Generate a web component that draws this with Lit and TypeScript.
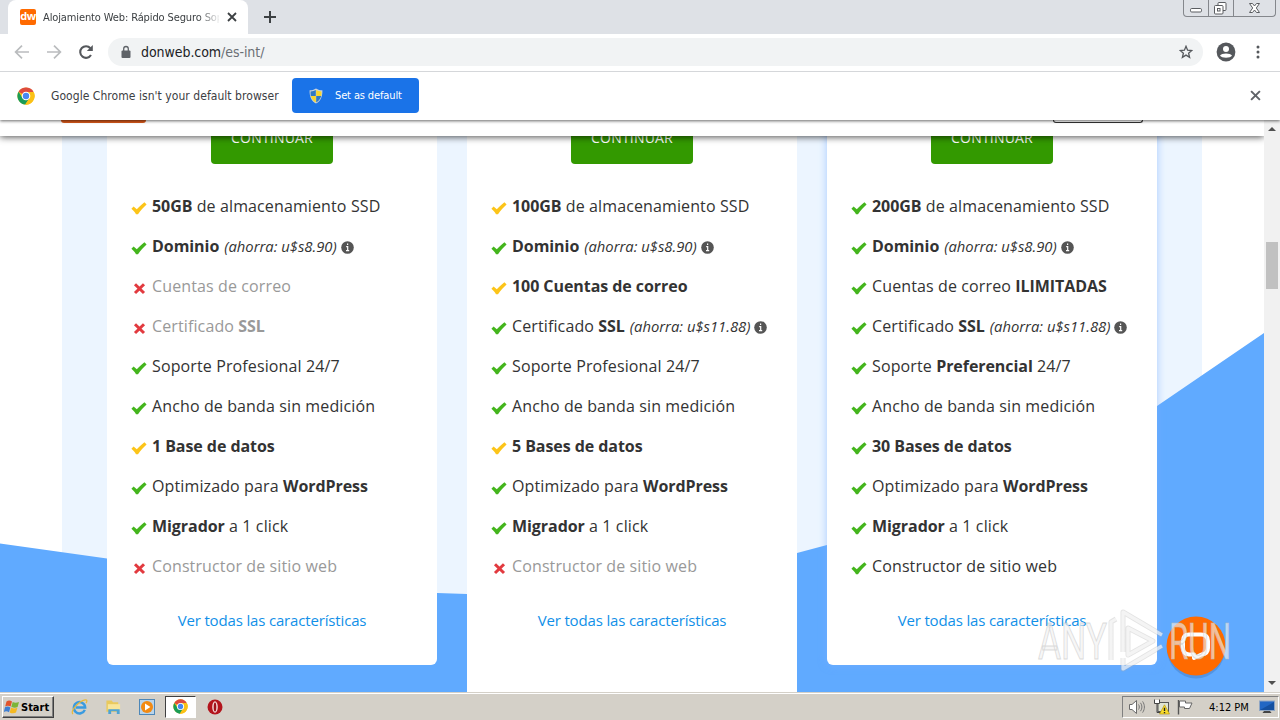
import {LitElement, html, svg, css} from 'lit';
import type {TemplateResult} from 'lit';
import {customElement, property} from 'lit/decorators.js';
import {classMap} from 'lit/directives/class-map.js';

type Mark = 'green' | 'yellow' | 'cross';

interface Feature {
  mark: Mark;
  label: TemplateResult;
  note?: string;
}

interface Plan {
  tall?: boolean;
  featured?: boolean;
  features: Feature[];
}

const support = html`Soporte Profesional 24/7`;
const bandwidth = html`Ancho de banda sin medición`;
const wordpress = html`Optimizado para <b>WordPress</b>`;
const migrator = html`<b>Migrador</b> a 1 click`;
const builder = html`Constructor de sitio web`;

const plans: Plan[] = [
  {
    features: [
      {mark: 'yellow', label: html`<b>50GB</b> de almacenamiento SSD`},
      {mark: 'green', label: html`<b>Dominio</b>`, note: '(ahorra: u$s8.90)'},
      {mark: 'cross', label: html`Cuentas de correo`},
      {mark: 'cross', label: html`Certificado <b>SSL</b>`},
      {mark: 'green', label: support},
      {mark: 'green', label: bandwidth},
      {mark: 'yellow', label: html`<b>1 Base de datos</b>`},
      {mark: 'green', label: wordpress},
      {mark: 'green', label: migrator},
      {mark: 'cross', label: builder},
    ],
  },
  {
    tall: true,
    features: [
      {mark: 'yellow', label: html`<b>100GB</b> de almacenamiento SSD`},
      {mark: 'green', label: html`<b>Dominio</b>`, note: '(ahorra: u$s8.90)'},
      {mark: 'yellow', label: html`<b>100 Cuentas de correo</b>`},
      {mark: 'green', label: html`Certificado <b>SSL</b>`, note: '(ahorra: u$s11.88)'},
      {mark: 'green', label: support},
      {mark: 'green', label: bandwidth},
      {mark: 'yellow', label: html`<b>5 Bases de datos</b>`},
      {mark: 'green', label: wordpress},
      {mark: 'green', label: migrator},
      {mark: 'cross', label: builder},
    ],
  },
  {
    featured: true,
    features: [
      {mark: 'green', label: html`<b>200GB</b> de almacenamiento SSD`},
      {mark: 'green', label: html`<b>Dominio</b>`, note: '(ahorra: u$s8.90)'},
      {mark: 'green', label: html`Cuentas de correo <b>ILIMITADAS</b>`},
      {mark: 'green', label: html`Certificado <b>SSL</b>`, note: '(ahorra: u$s11.88)'},
      {mark: 'green', label: html`Soporte <b>Preferencial</b> 24/7`},
      {mark: 'green', label: bandwidth},
      {mark: 'green', label: html`<b>30 Bases de datos</b>`},
      {mark: 'green', label: wordpress},
      {mark: 'green', label: migrator},
      {mark: 'green', label: builder},
    ],
  },
];

const chromeLogo = (size: number) => html`
  <svg width=${size} height=${size} viewBox="0 0 48 48">
    <circle cx="24" cy="24" r="23" fill="#fbc116" />
    <path d="M24 24 L4.1 12.5 A23 23 0 0 1 43.9 12.5 Z" fill="#dd4b3e" />
    <path d="M4.1 12.5 A23 23 0 0 0 22 46.9 L33 29 L15 29 Z" fill="#1a9c56" />
    <path d="M24 13 H44.2 A23 23 0 0 1 22 46.9 L34 29 Z" fill="#fbc116" />
    <circle cx="24" cy="24" r="11.5" fill="#fff" />
    <circle cx="24" cy="24" r="8.5" fill="#4688f1" />
  </svg>
`;

const closeIcon = (size: number, color: string) => html`
  <svg width=${size} height=${size} viewBox="0 0 10 10">
    <path d="M1 1 L9 9 M9 1 L1 9" stroke=${color} stroke-width="1.8" />
  </svg>
`;

@customElement('plan-mark')
export class PlanMark extends LitElement {
  @property() kind: Mark = 'green';

  static styles = css`
    :host {
      display: block;
      width: 16px;
      height: 16px;
    }

    svg {
      display: block;
    }
  `;

  override render() {
    if (this.kind === 'cross') {
      return html`
        <svg width="16" height="16" viewBox="0 0 16 16">
          <path d="M4 4.2 L13 13 M13 4.2 L4 13" stroke="#e23a3f" stroke-width="3" />
        </svg>
      `;
    }
    const color = this.kind === 'green' ? '#44b51d' : '#fcc419';
    return html`
      <svg width="16" height="16" viewBox="0 0 16 16">
        <path
          d="M0.4 8.8 L2.6 6.4 L5.8 9.2 C8 7 10.6 4.3 13.4 2.2 L15.6 4.4 C12.4 7.4 9.6 10.4 7 14.2 L5 14.2 C3.8 12 2.2 10.2 0.4 8.8 Z"
          fill=${color}
        />
      </svg>
    `;
  }
}

@customElement('plan-card')
export class PlanCard extends LitElement {
  @property({ type: Object }) plan: Plan = plans[0];

  static styles = css`
    :host {
      display: block;
      width: 330px;
    }

    .card {
      box-sizing: border-box;
      height: 547px;
      background: #fff;
      border-radius: 0 0 6px 6px;
      display: flex;
      flex-direction: column;
      align-items: center;
    }

    .card--tall {
      height: 600px;
    }

    .card--featured {
      box-shadow: 0 0 8px rgba(120, 175, 255, 0.6);
    }

    .button {
      box-sizing: border-box;
      width: 122px;
      height: 46px;
      border-radius: 4px;
      background: #339900;
      color: #fff;
      font-size: 14px;
      letter-spacing: 0.2px;
      line-height: 39px;
      text-align: center;
    }

    ul {
      align-self: stretch;
      margin: 22px 0 0;
      padding: 0 0 0 24px;
      list-style: none;
    }

    li {
      display: flex;
      align-items: center;
      height: 40px;
      color: #333;
      font-size: 16px;
      letter-spacing: 0.12px;
      white-space: nowrap;
    }

    li.off {
      color: #999;
    }

    b {
      letter-spacing: -0.06px;
    }

    plan-mark {
      margin: 4px 5px 0 0;
    }

    i {
      margin-left: 5px;
      font-size: 14.8px;
      letter-spacing: 0;
    }

    .info {
      width: 13px;
      height: 13px;
      margin: 2px 0 0 4px;
    }

    .more {
      margin-top: 22px;
      color: #1190e8;
      font-size: 15px;
      letter-spacing: -0.16px;
      line-height: 24px;
      white-space: nowrap;
    }
  `;

  renderFeature(feature: Feature) {
    return html`
      <li class=${classMap({ off: feature.mark === 'cross' })}>
        <plan-mark kind=${feature.mark}></plan-mark>
        <span>${feature.label}</span>
        ${feature.note
          ? html`
              <i>${feature.note}</i>
              <svg class="info" viewBox="0 0 13 13">
                <circle cx="6.5" cy="6.5" r="6.3" fill="#555" />
                <path d="M6.6 2.4 V4 M5.2 5.6 H6.7 V9.6 M5 9.7 H8.2" fill="none" stroke="#fff" stroke-width="1.2" />
              </svg>
            `
          : ''}
      </li>
    `;
  }

  override render() {
    return html`
      <div
        class=${classMap({
          card: true,
          'card--tall': !!this.plan.tall,
          'card--featured': !!this.plan.featured,
        })}
      >
        <div class="button">CONTINUAR</div>
        <ul>
          ${this.plan.features.map((feature) => this.renderFeature(feature))}
        </ul>
        <div class="more">Ver todas las características</div>
      </div>
    `;
  }
}

@customElement('browser-chrome')
export class BrowserChrome extends LitElement {
  static styles = css`
    :host {
      display: block;
      font-family: 'DejaVu Sans Condensed', 'DejaVu Sans', sans-serif;
      font-stretch: condensed;
      position: relative;
      z-index: 3;
      box-shadow: 0 1px 3px rgba(0, 0, 0, 0.6);
    }

    svg {
      display: block;
      flex: none;
    }

    .tabs {
      display: flex;
      height: 34px;
      padding-left: 8px;
      background: #dee1e6;
    }

    .tab {
      box-sizing: border-box;
      display: flex;
      align-items: center;
      width: 240px;
      padding: 0 11px 0 12px;
      border-radius: 8px 8px 0 0;
      background: #fff;
    }

    .favicon {
      width: 16px;
      height: 16px;
      border-radius: 2px;
      background: #ff6a00;
      color: #fff;
      font: bold 11px/14px 'Open Sans', sans-serif;
      letter-spacing: -0.5px;
      text-align: center;
    }

    .tab__title {
      width: 176px;
      margin-left: 7px;
      overflow: hidden;
      color: #3c4043;
      font-size: 11px;
      letter-spacing: -0.12px;
      white-space: nowrap;
      mask-image: linear-gradient(to right, #000 155px, transparent 178px);
    }

    .tab__close {
      margin-left: auto;
    }

    .new-tab {
      align-self: center;
      margin-left: 16px;
    }

    .window {
      display: flex;
      height: 16px;
      margin-left: auto;
      margin-right: 4px;
      border: 1px solid #84878c;
      border-top: 0;
      border-radius: 0 0 4px 4px;
    }

    .window > svg + svg {
      border-left: 1px solid #84878c;
    }

    .toolbar {
      box-sizing: border-box;
      display: flex;
      align-items: center;
      height: 38px;
      padding: 0 14px 1px;
      background: #fff;
      border-bottom: 1px solid #d5d7da;
    }

    .nav {
      display: flex;
      gap: 16px;
    }

    .omnibox {
      box-sizing: border-box;
      display: flex;
      align-items: center;
      width: 1095px;
      height: 28px;
      margin-left: 14px;
      padding: 0 10px 0 12px;
      border-radius: 14px;
      background: #f1f3f4;
      font-size: 14px;
      letter-spacing: -0.06px;
      color: #202124;
    }

    .url {
      margin-left: 9px;
      flex: 1;
    }

    .url span {
      color: #6a6f74;
    }

    .profile {
      margin-left: 13px;
    }

    .dots {
      margin-left: 20px;
    }

    .infobar {
      box-sizing: border-box;
      display: flex;
      align-items: center;
      height: 48px;
      padding: 0 19px 1px 17px;
      background: #fff;
      color: #3c4043;
      font-size: 12px;
      letter-spacing: 0.05px;
      white-space: nowrap;
    }

    .infobar__text {
      width: 228px;
      margin: 0 13px 0 16px;
    }

    .infobar__button {
      box-sizing: border-box;
      display: flex;
      align-items: center;
      gap: 12px;
      width: 127px;
      height: 35px;
      padding-left: 17px;
      border-radius: 4px;
      background: #1a73e8;
      color: #fff;
      font-size: 11px;
      letter-spacing: -0.13px;
    }

    .infobar__close {
      margin-left: auto;
    }
  `;

  override render() {
    return html`
      <div class="tabs">
        <div class="tab">
          <div class="favicon">dw</div>
          <div class="tab__title">Alojamiento Web: Rápido Seguro Sop</div>
          <div class="tab__close">${closeIcon(10, '#3c4043')}</div>
        </div>
        <svg class="new-tab" width="12" height="12" viewBox="0 0 12 12">
          <path d="M6 0 V12 M0 6 H12" stroke="#3c4043" stroke-width="2" />
        </svg>
        <div class="window">
          <svg width="24" height="16" viewBox="0 0 24 16">
            <rect x="6.5" y="8.5" width="11" height="3.5" rx="1.2" fill="#fff" stroke="#5a5d61" />
          </svg>
          <svg width="24" height="16" viewBox="0 0 24 16">
            <rect x="9" y="2.5" width="8" height="8" rx="1" fill="#fff" stroke="#5a5d61" />
            <rect x="5.5" y="5.5" width="8.5" height="8.5" rx="1" fill="#fff" stroke="#5a5d61" />
            <rect x="8.5" y="8.5" width="2.5" height="2.5" fill="#fff" stroke="#5a5d61" />
          </svg>
          <svg width="41" height="16" viewBox="0 0 41 16">
            <path
              d="M15.5 3.5 H18.5 L20.5 6 L22.5 3.5 H25.5 L22.3 8 L25.5 12.5 H22.5 L20.5 10 L18.5 12.5 H15.5 L18.7 8 Z"
              fill="#fff"
              stroke="#5a5d61"
            />
          </svg>
        </div>
      </div>

      <div class="toolbar">
        <div class="nav">
          <svg width="16" height="16" viewBox="0 0 16 16">
            <path d="M15 8 H2 M8 1.6 L1.6 8 L8 14.4" fill="none" stroke="#babcbe" stroke-width="1.7" />
          </svg>
          <svg width="16" height="16" viewBox="0 0 16 16">
            <path d="M1 8 H14 M8 1.6 L14.4 8 L8 14.4" fill="none" stroke="#babcbe" stroke-width="1.7" />
          </svg>
          <svg width="16" height="16" viewBox="0 0 16 16">
            <path d="M13 11 A5.8 5.8 0 1 1 12.4 4.2" fill="none" stroke="#55585c" stroke-width="2.1" />
            <path d="M14.8 1 V7 H8.8 Z" fill="#55585c" />
          </svg>
        </div>
        <div class="omnibox">
          <svg width="12" height="14" viewBox="0 0 12 14">
            <rect x="1.5" y="5.5" width="9" height="7.5" rx="1" fill="#5f6368" />
            <path d="M3.7 6 V3.8 A2.3 2.3 0 0 1 8.3 3.8 V6" fill="none" stroke="#5f6368" stroke-width="1.3" />
          </svg>
          <div class="url">donweb.com<span>/es-int/</span></div>
          <svg width="14" height="14" viewBox="0 0 14 14">
            <path
              d="M7 1.3 L8.6 5.2 L12.8 5.5 L9.6 8.2 L10.6 12.4 L7 10.1 L3.4 12.4 L4.4 8.2 L1.2 5.5 L5.4 5.2 Z"
              fill="none"
              stroke="#55585c"
              stroke-width="1.3"
            />
          </svg>
        </div>
        <svg class="profile" width="20" height="20" viewBox="0 0 20 20">
          <circle cx="10" cy="10" r="9.4" fill="#55585c" />
          <circle cx="10" cy="7" r="3" fill="#fff" />
          <path d="M4 13.6 C5.6 10.8 14.4 10.8 16 13.6 C14.4 16.6 5.6 16.6 4 13.6 Z" fill="#fff" />
        </svg>
        <svg class="dots" width="4" height="14" viewBox="0 0 4 14">
          <circle cx="2" cy="2" r="1.5" fill="#55585c" />
          <circle cx="2" cy="7" r="1.5" fill="#55585c" />
          <circle cx="2" cy="12" r="1.5" fill="#55585c" />
        </svg>
      </div>

      <div class="infobar">
        ${chromeLogo(18)}
        <div class="infobar__text">Google Chrome isn't your default browser</div>
        <div class="infobar__button">
          <svg width="14" height="16" viewBox="0 0 14 16">
            <path d="M7 0.5 C9 1.8 11 2.3 13.4 2.3 C13.6 8 12 13 7 15.6 C2 13 0.4 8 0.6 2.3 C3 2.3 5 1.8 7 0.5 Z" fill="#c9d3dc" />
            <path d="M6.8 2 V8 H1.8 C1.5 6.4 1.5 5 1.6 3.4 C3.6 3.3 5.4 2.8 6.8 2 Z M7.2 8 H12.2 C11.4 11 9.8 13 7.2 14.4 Z" fill="#2f78c4" />
            <path d="M7.2 2 V8 H12.2 C12.5 6.4 12.5 5 12.4 3.4 C10.4 3.3 8.6 2.8 7.2 2 Z M6.8 8 H1.8 C2.6 11 4.2 13 6.8 14.4 Z" fill="#f7d52d" />
          </svg>
          <span>Set as default</span>
        </div>
        <div class="infobar__close">${closeIcon(11, '#5f6368')}</div>
      </div>
    `;
  }
}

@customElement('task-bar')
export class TaskBar extends LitElement {
  static styles = css`
    :host {
      box-sizing: border-box;
      display: flex;
      align-items: center;
      height: 28px;
      padding: 2px 1px 0 2px;
      background: #d4d0c8;
      box-shadow: inset 0 1px #d4d0c8, inset 0 2px #fff;
      font-family: 'DejaVu Sans Condensed', 'DejaVu Sans', sans-serif;
      font-stretch: condensed;
      font-size: 11px;
      color: #000;
    }

    svg {
      display: block;
    }

    .start {
      box-sizing: border-box;
      display: flex;
      align-items: center;
      gap: 1px;
      width: 52px;
      height: 22px;
      padding-left: 1px;
      border: 1px solid;
      border-color: #fff #404040 #404040 #fff;
      box-shadow: inset -1px -1px #808080;
      font-weight: bold;
    }

    .launch {
      display: flex;
      align-items: center;
      margin-left: 17px;
    }

    .launch > svg {
      margin-right: 17px;
    }

    .active {
      box-sizing: border-box;
      width: 31px;
      height: 22px;
      margin: 0 11px 0 -7px;
      padding: 2px 0 0 7px;
      border: 1px solid;
      border-color: #404040 #fff #fff #404040;
      background: #fff;
    }

    .tray {
      box-sizing: border-box;
      display: flex;
      align-items: center;
      width: 157px;
      height: 22px;
      margin-left: auto;
      padding: 0 3px 0 5px;
      border: 1px solid;
      border-color: #808080 #fff #fff #808080;
    }

    .tray > svg {
      margin-right: 7px;
    }

    .clock {
      flex: 1;
      padding-left: 9px;
      white-space: nowrap;
    }

    .tray > .desktop {
      margin-right: 0;
    }
  `;

  override render() {
    return html`
      <div class="start">
        <svg width="16" height="16" viewBox="0 0 16 16">
          <path d="M2.5 2.5 C4.5 1 6.5 1.5 8 2.6 L6.6 7.6 C5 6.5 3 6.4 1.2 7.4 Z" fill="#e2552c" />
          <path d="M8.7 3 C10.5 4 12.5 4.1 15 3 L13.6 8 C11.5 9 9.5 8.8 7.3 7.8 Z" fill="#7cb536" />
          <path d="M1 8.2 C2.8 7.2 4.8 7.3 6.4 8.4 L5 13.2 C3.3 12.2 1.4 12 -0.2 13 Z" fill="#3f7fd2" />
          <path d="M7.1 8.6 C9.2 9.7 11.2 9.8 13.4 8.8 L12 13.6 C9.8 14.6 7.8 14.5 5.7 13.4 Z" fill="#f5b921" />
        </svg>
        <span>Start</span>
      </div>
      <div class="launch">
        <svg width="17" height="18" viewBox="0 0 18 18">
          <path d="M14.6 12 A6 6 0 1 1 15 9.6 H5" fill="none" stroke="#3a9be0" stroke-width="2.6" />
          <path d="M2 16.5 C-1 13 8 3 15 1.4 C17.5 1 17 3.6 15.8 5" fill="none" stroke="#e9b93a" stroke-width="1.3" />
        </svg>
        <svg width="17" height="18" viewBox="0 0 18 18">
          <path d="M1.5 2 H7 L8.5 4 H14 V14 H1.5 Z" fill="#e9c95c" />
          <rect x="3" y="6" width="13" height="6" fill="#f8e59a" />
          <path d="M3.5 16.5 V11.5 H15.5 V16.5 H12.5 V13.6 H6.5 V16.5 Z" fill="#4ea3d4" />
        </svg>
        <svg width="16" height="16" viewBox="0 0 16 16">
          <rect x="0.5" y="0.5" width="15" height="15" fill="#b9d4ea" stroke="#4d87b8" />
          <circle cx="8" cy="8" r="6" fill="#f28a12" />
          <path d="M6 4.6 L11.4 8 L6 11.4 Z" fill="#fff" />
        </svg>
        <div class="active">${chromeLogo(15)}</div>
        <svg width="16" height="16" viewBox="0 0 16 16">
          <circle cx="8" cy="8" r="7.5" fill="#b3141c" />
          <ellipse cx="8" cy="8" rx="2.8" ry="5.8" fill="#f4d8d8" />
          <ellipse cx="8" cy="8" rx="1.3" ry="4.6" fill="#a0121a" />
        </svg>
      </div>
      <div class="tray">
        <svg width="18" height="16" viewBox="0 0 18 16">
          <path d="M1.5 5.5 H4 L8.5 1.5 V14.5 L4 10.5 H1.5 Z" fill="#fff" stroke="#6a6a6a" />
          <path d="M10.5 5.5 C11.6 7 11.6 9 10.5 10.5 M12.5 3.8 C14.4 6.4 14.4 9.6 12.5 12.2 M14.6 2.4 C17 6 17 10 14.6 13.6" fill="none" stroke="#777" />
        </svg>
        <svg width="17" height="16" viewBox="0 0 17 16">
          <rect x="5" y="3.5" width="10.5" height="9" fill="#dfe3d2" stroke="#555" />
          <path d="M1.5 0.5 V4.5 H6.5 V0.5 M4 4.5 V13.5 H8" fill="none" stroke="#444" />
          <rect x="2" y="1" width="4" height="3" fill="#fff" />
          <path d="M11.5 5.8 L16.5 15 H6.5 Z" fill="#f9dc2d" stroke="#b08f00" stroke-width="0.6" />
          <path d="M11.5 8.8 V12 M11.5 13 V14.2" stroke="#222" stroke-width="1.4" />
        </svg>
        <svg width="16" height="16" viewBox="0 0 16 16">
          <path d="M1.5 1 V15.5" stroke="#555" stroke-width="1.4" />
          <path d="M2.5 2 H8.5 V4 H15 L12.5 9.5 H7.5 V8 H2.5 Z" fill="#fff" stroke="#666" />
        </svg>
        <div class="clock">4:12 PM</div>
        <svg class="desktop" width="16" height="14" viewBox="0 0 16 14">
          <rect x="0.5" y="1" width="15" height="9.5" fill="#2267c4" stroke="#8fa6c4" />
          <path d="M1 10 L15 2 V10 Z" fill="#1550a0" />
          <path d="M5 11 H11 L12.5 13 H3.5 Z" fill="#444" />
        </svg>
      </div>
    `;
  }
}

@customElement('app-root')
export class AppRoot extends LitElement {
  static styles = css`
    :host {
      display: flex;
      flex-direction: column;
      position: relative;
      width: 1280px;
      height: 720px;
      overflow: hidden;
      background: #fff;
      font-family: 'Open Sans', 'Noto Sans', sans-serif;
    }

    .view {
      display: flex;
      height: 572px;
    }

    .page {
      position: relative;
      width: 1264px;
      overflow: hidden;
      background: #fff;
    }

    .site-header {
      position: relative;
      z-index: 2;
      box-sizing: border-box;
      display: flex;
      justify-content: space-between;
      height: 16px;
      padding: 0 121px 0 61px;
      background: #fff;
      box-shadow: 0 1px 7px rgba(0, 0, 0, 0.7);
    }

    .site-header__logo {
      width: 85px;
      height: 3px;
      border-radius: 0 0 3px 3px;
      background: #d9591a;
    }

    .site-header__login {
      box-sizing: border-box;
      width: 90px;
      height: 3px;
      border: 1px solid #333;
      border-top: 0;
      border-radius: 0 0 3px 3px;
    }

    .wave {
      position: absolute;
      left: 0;
      top: 0;
    }

    .plans {
      position: relative;
      display: flex;
      gap: 30px;
      margin-top: -18px;
      padding-left: 107px;
    }

    .scrollbar {
      display: flex;
      flex-direction: column;
      align-items: center;
      width: 16px;
      background: #f1f1f1;
    }

    .scrollbar__thumb {
      width: 12px;
      height: 47px;
      margin: 108px 0 auto;
      background: #c1c1c1;
    }

    .scrollbar svg {
      display: block;
    }

    .chat {
      position: absolute;
      z-index: 2;
      left: 1166px;
      top: 616px;
    }

    .watermark {
      position: absolute;
      z-index: 3;
      left: 1030px;
      top: 604px;
    }
  `;

  renderWatermark() {
    const word = (x: number, width: number, text: string) => svg`
      <text
        x=${x}
        y="55"
        textLength=${width}
        lengthAdjust="spacingAndGlyphs"
        font-family="Roboto, sans-serif"
        font-size="50"
        font-weight="400"
        fill="#f2f2f2"
        fill-opacity="0.65"
        stroke="#bbb"
        stroke-opacity="0.5"
        stroke-width="1"
      >${text}</text>
    `;
    const play = 'M81 56 V18 L86 15 M93 48 V8 L132 31 M93 54 V65 L132 42 M98 24 L123 37 L98 51 Z';
    return html`
      <svg class="watermark" width="230" height="76" viewBox="0 0 230 76">
        ${word(8, 69, 'ANY')}
        <g fill="none" stroke-linejoin="round">
          <path d=${play} stroke="#aaa" stroke-opacity="0.32" stroke-width="5" />
          <path d=${play} stroke="#fff" stroke-opacity="0.6" stroke-width="3.2" />
        </g>
        ${word(139, 62, 'RUN')}
      </svg>
    `;
  }

  override render() {
    return html`
      <browser-chrome></browser-chrome>
      <div class="view">
        <div class="page">
          <svg class="wave" width="1264" height="572" viewBox="0 120 1264 572">
            <rect x="62" y="120" width="1140" height="572" fill="#ecf5ff" />
            <path
              d="M0 543.5 L107 558.5 L437 593 L467 594 L797 553 L827 545 L1157 406 L1264 333 V692 H0 Z"
              fill="#60aaff"
            />
          </svg>
          <div class="site-header">
            <div class="site-header__logo"></div>
            <div class="site-header__login"></div>
          </div>
          <div class="plans">${plans.map((plan) => html`<plan-card .plan=${plan}></plan-card>`)}</div>
        </div>
        <div class="scrollbar">
          <svg width="16" height="14" viewBox="0 0 16 14">
            <path d="M4 11 H12 L8 7 Z" fill="#505050" />
          </svg>
          <div class="scrollbar__thumb"></div>
          <svg width="16" height="16" viewBox="0 0 16 16">
            <path d="M4 5 H12 L8 9 Z" fill="#505050" />
          </svg>
        </div>
      </div>
      <task-bar></task-bar>
      <svg class="chat" width="62" height="66" viewBox="0 0 62 66">
        <ellipse cx="30" cy="33" rx="29" ry="29.5" fill="#3d6cae" opacity="0.35" />
        <circle cx="30" cy="30" r="29.5" fill="#ff6a00" />
        <path
          d="M23 18.5 H35 Q42 18.5 42 25 V32 Q42 38 35.5 38.5 L28 42 V38.5 H23 Q17 38 17 32 V25 Q17 18.5 23 18.5 Z"
          fill="none"
          stroke="#fff"
          stroke-width="4"
          stroke-linejoin="round"
        />
      </svg>
      ${this.renderWatermark()}
    `;
  }
}
